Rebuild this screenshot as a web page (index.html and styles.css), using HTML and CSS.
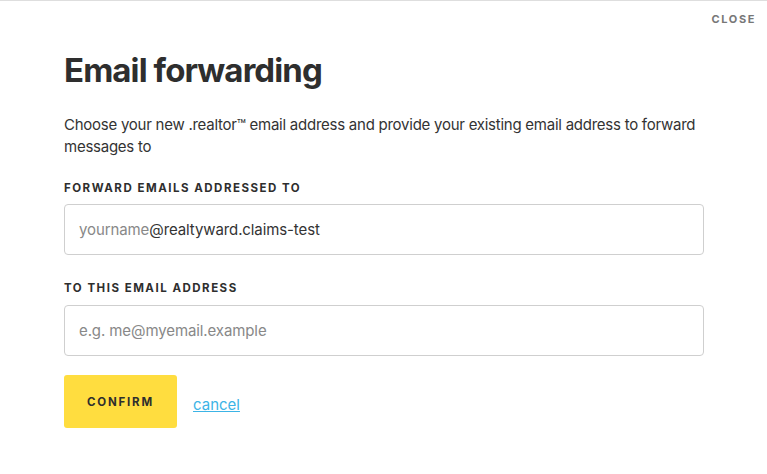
FILE: index.html
```html
<!DOCTYPE html>
<html>
<head>
<meta charset="utf-8">
<link rel="stylesheet" href="styles.css">
</head>
<body>
<div class="modal">
  <div class="topbar"><button class="close">CLOSE</button></div>
  <div class="content">
    <h1 class="title">Email forwarding</h1>
    <p class="intro">Choose your new .realtor™ email address and provide your existing email address to forward messages to</p>
    <label class="label first">FORWARD EMAILS ADDRESSED TO</label>
    <div class="field f1"><span class="ph">yourname</span><span class="domain">@realtyward.claims-test</span></div>
    <label class="label second">TO THIS EMAIL ADDRESS</label>
    <div class="field f2"><span class="ph">e.g. me@myemail.example</span></div>
    <div class="actions">
      <button class="confirm">CONFIRM</button>
      <a class="cancel" href="#">cancel</a>
    </div>
  </div>
</div>
</body>
</html>
```
FILE: styles.css
```css
* { box-sizing: border-box; }
html, body { margin: 0; padding: 0; background: #fff; }
body { font-family: Inter, "Liberation Sans", sans-serif; color: #333; }
.modal { border-top: 1px solid #dedede; width: 767px; height: 474px; }
.topbar { display: flex; justify-content: flex-end; padding: 9px 11px 0 0; height: 27px; }
.close { border: 0; background: none; padding: 0; font-family: Inter, sans-serif; font-weight: 700; font-size: 11px; letter-spacing: 1.6px; color: #777; }
.content { padding: 0 63px 0 64px; }
.title { margin: 22px 0 0; font-size: 33px; font-weight: 700; letter-spacing: -0.9px; line-height: 40px; color: #2e2e2e; }
.intro { margin: 24px 0 0; font-size: 15px; line-height: 22px; color: #333; letter-spacing: -0.25px; }
.label { display: block; font-size: 11.5px; font-weight: 700; letter-spacing: 1.5px; line-height: 14px; color: #2e2e2e; }
.label.first { margin-top: 23px; }
.label.second { margin-top: 26px; }
.field { height: 51px; border: 1px solid #cfcfcf; border-radius: 4px; display: flex; align-items: center; padding-left: 14px; font-size: 15px; letter-spacing: -0.1px; }
.f1 { margin-top: 9px; }
.f2 { margin-top: 10px; }
.ph { color: #888; }
.domain { color: #333; }
.actions { display: flex; align-items: center; margin-top: 19px; gap: 16px; }
.confirm { width: 113px; height: 53px; background: #ffdd3f; border: 0; border-radius: 3px; font-family: Inter, sans-serif; font-weight: 700; font-size: 11.5px; letter-spacing: 1.8px; color: #2e2e2e; }
.cancel { color: #3cb4e6; font-size: 15px; margin-top: 6px; }
```
